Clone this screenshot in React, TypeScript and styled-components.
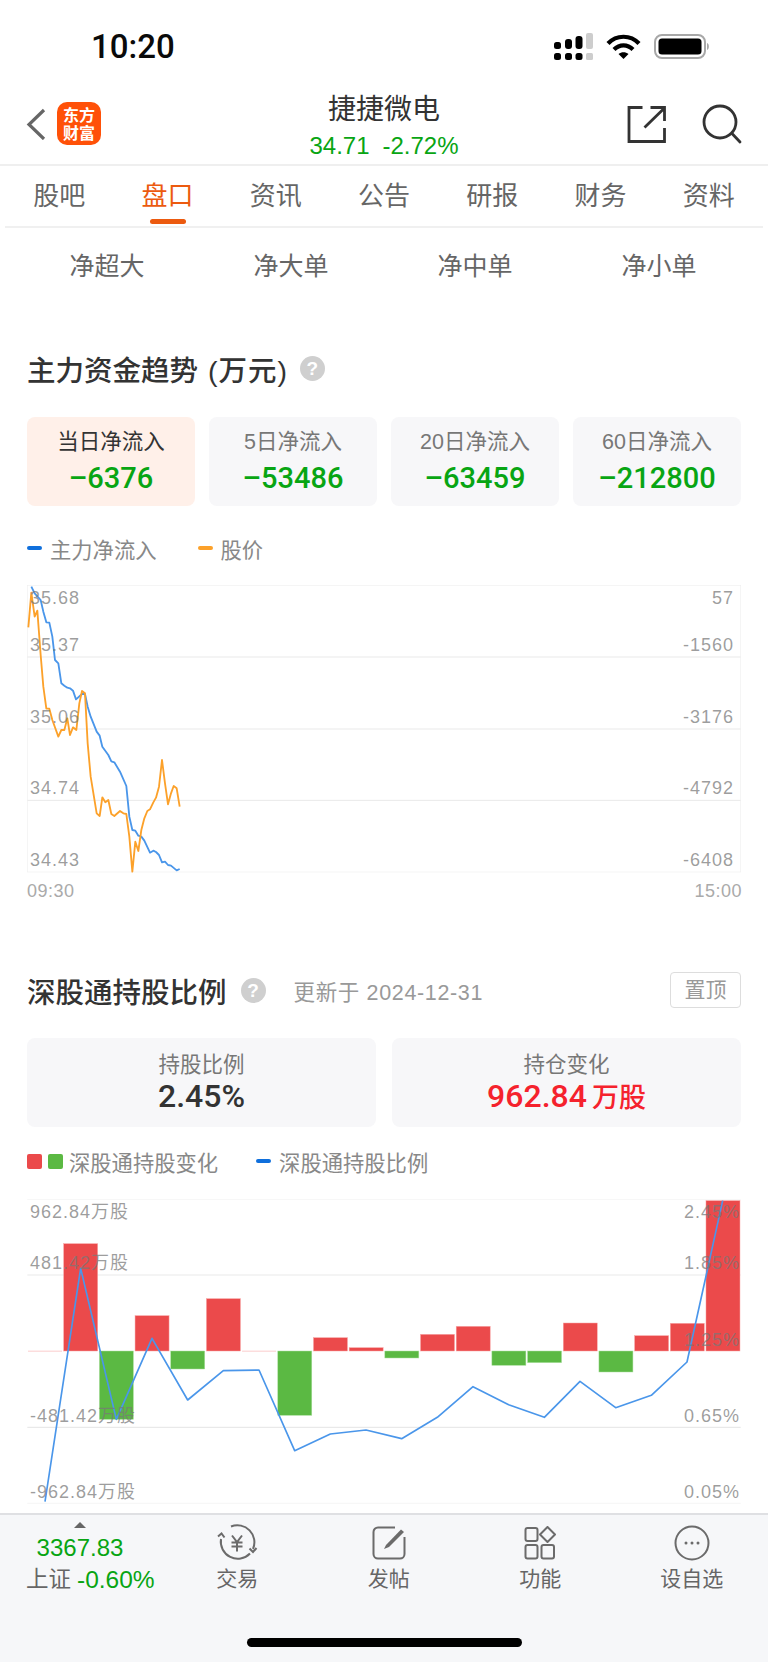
import React from 'react';
import styled, { createGlobalStyle } from 'styled-components';

const FONT = '"Liberation Sans", "Noto Sans CJK SC", sans-serif';
const GREEN = '#08a513';

const GlobalStyle = createGlobalStyle`
    html, body {
        margin: 0;
        padding: 0;
        background: #fff;
    }
    * {
        box-sizing: border-box;
    }
`;

const Page = styled.div`
    width: 768px;
    height: 1662px;
    overflow: hidden;
    display: flex;
    flex-direction: column;
    background: #fff;
    font-family: ${FONT};
    color: #333;
`;

const StatusBar = styled.div`
    height: 92px;
    display: flex;
    align-items: center;
    justify-content: space-between;
    padding: 0 57px 0 91px;
`;

const StatusIcons = styled.div`
    display: flex;
    align-items: center;
    gap: 13px;
`;

const Clock = styled.div`
    font-family: Roboto, sans-serif;
    font-weight: 500;
    font-size: 33px;
    color: #0a0a0a;
`;

const NavBar = styled.div`
    height: 74px;
    display: grid;
    grid-template-columns: 1fr auto 1fr;
    align-items: start;
    border-bottom: 2px solid #efefef;
`;

const NavLeft = styled.div`
    display: flex;
    align-items: center;
    padding: 10px 0 0 26px;
    gap: 11px;
`;

const Logo = styled.div`
    width: 44px;
    height: 43px;
    padding-top: 3px;
    border-radius: 10px;
    background: #ff5108;
    color: #fff;
    font-family: "Noto Sans CJK SC", sans-serif;
    font-weight: 700;
    font-size: 16px;
    line-height: 18px;
    text-align: center;
`;

const NavTitle = styled.div`
    text-align: center;
    padding-top: 1px;
`;

const StockName = styled.div`
    font-size: 28px;
    line-height: 34px;
    color: #333;
`;

const StockPrice = styled.div`
    font-size: 24px;
    line-height: 28px;
    margin-top: 5px;
    color: ${GREEN};
    display: flex;
    gap: 13px;
    justify-content: center;
`;

const NavRight = styled.div`
    display: flex;
    justify-content: flex-end;
    align-items: center;
    gap: 36px;
    padding: 12px 26px 0 0;
`;

const Tabs = styled.div`
    display: grid;
    grid-template-columns: repeat(7, 1fr);
    margin: 0 5px;
    height: 62px;
    border-bottom: 2px solid #f0f0f0;
`;

const Tab = styled.div<{ $active?: boolean }>`
    position: relative;
    text-align: center;
    font-size: 26px;
    line-height: 60px;
    color: ${(props) => (props.$active ? '#ec5a0f' : '#666')};

    ${(props) =>
        props.$active &&
        `&::after {
            content: '';
            position: absolute;
            left: 37px;
            bottom: 2px;
            width: 36px;
            height: 5px;
            border-radius: 3px;
            background: #ec5a0f;
        }`}
`;

const SubTabs = styled.div`
    display: grid;
    grid-template-columns: repeat(4, 184px);
    padding: 0 15px 4px;
    height: 76px;
    align-items: center;
`;

const SubTab = styled.div`
    text-align: center;
    font-size: 25px;
    color: #666;
`;

const SectionHead = styled.div<{ $top: number }>`
    display: flex;
    align-items: center;
    height: 40px;
    margin: ${(props) => props.$top}px 27px 0;
`;

const SectionTitle = styled.div`
    font-size: 28.500px;
    font-weight: 500;
    color: #333;
`;

const TitleUnit = styled.span`
    margin-left: 2px;
    letter-spacing: 1px;
`;

const Help = styled.span<{ $left: number }>`
    width: 25px;
    height: 25px;
    margin-left: ${(props) => props.$left}px;
    border-radius: 50%;
    background: #cfcfcf;
    color: #fff;
    font-size: 19px;
    font-weight: 700;
    line-height: 25px;
    text-align: center;
`;

const UpdatedAt = styled.div`
    margin-left: 28px;
    font-size: 21.500px;
    color: #999;
    letter-spacing: 0.650px;
`;

const PinButton = styled.div`
    margin-left: auto;
    width: 71px;
    height: 36px;
    border: 1px solid #ddd;
    border-radius: 4px;
    font-size: 21px;
    line-height: 34px;
    text-align: center;
    color: #999;
`;

const CardGrid = styled.div<{ $cols: number; $gap: number; $top: number }>`
    display: grid;
    grid-template-columns: repeat(${(props) => props.$cols}, 1fr);
    gap: ${(props) => props.$gap}px;
    margin: ${(props) => props.$top}px 27px 0;
`;

const Card = styled.div<{ $active?: boolean }>`
    height: 89px;
    border-radius: 8px;
    background: ${(props) => (props.$active ? '#fff0e9' : '#f7f7f9')};
    text-align: center;
    display: flex;
    flex-direction: column;
    align-items: center;
    padding-top: 11px;
`;

const CardLabel = styled.div<{ $active?: boolean }>`
    font-size: 21.500px;
    line-height: 28px;
    color: ${(props) => (props.$active ? '#333' : '#777')};
`;

const HoldLabel = styled(CardLabel)`
    margin-top: 2px;
`;

const CardValue = styled.div<{ $color: string }>`
    font-family: Roboto, "Noto Sans CJK SC", sans-serif;
    font-weight: 500;
    font-size: 29px;
    line-height: 36px;
    margin-top: 4px;
    color: ${(props) => props.$color};
`;

const HoldValue = styled(CardValue)`
    font-size: 32px;
    margin-top: -1px;
`;

const HoldUnit = styled.span`
    font-size: 27px;
    margin-left: 5px;
`;

const Legend = styled.div<{ $top: number }>`
    display: flex;
    align-items: center;
    height: 30px;
    margin: ${(props) => props.$top}px 27px 0;
    font-size: 21.300px;
    color: #888;
`;

const LegendDash = styled.span<{ $color: string; $left?: number }>`
    width: 15px;
    height: 4px;
    border-radius: 2px;
    margin-left: ${(props) => props.$left || 0}px;
    margin-right: 8px;
    background: ${(props) => props.$color};
`;

const LegendSwatch = styled.span<{ $color: string }>`
    width: 15px;
    height: 15px;
    border-radius: 2px;
    margin-right: 6px;
    background: ${(props) => props.$color};
`;

const Chart = styled.div<{ $height: number; $top: number }>`
    position: relative;
    height: ${(props) => props.$height}px;
    margin: ${(props) => props.$top}px 27px 0;

    svg {
        display: block;
    }
`;

const AxisOverlay = styled.div<{ $rows: string; $right: number }>`
    position: absolute;
    inset: 1px ${(props) => props.$right}px 0 3px;
    display: grid;
    grid-template-rows: ${(props) => props.$rows};
    font-size: 18px;
    line-height: 24px;
    letter-spacing: 1px;
    color: rgba(120, 120, 120, 0.72);
    pointer-events: none;
`;

const AxisRow = styled.div`
    display: flex;
    justify-content: space-between;
`;

const TimeAxis = styled.div`
    display: flex;
    justify-content: space-between;
    margin: 6px 26px 0 27px;
    height: 24px;
    font-size: 18px;
    line-height: 24px;
    letter-spacing: 0.500px;
    color: #aaa;
`;

const BottomBar = styled.div`
    position: relative;
    margin-top: 9px;
    flex: 1;
    display: flex;
    align-items: flex-start;
    background: #f6f7f9;
    border-top: 2px solid #dfe0e3;
`;

const IndexBlock = styled.div`
    width: 161.500px;
    padding: 7px 0 0 26px;
    flex-shrink: 0;
`;

const IndexTop = styled.div`
    width: 108px;
    display: flex;
    flex-direction: column;
    align-items: center;
`;

const IndexArrow = styled.span`
    width: 0;
    height: 0;
    border-left: 6px solid transparent;
    border-right: 6px solid transparent;
    border-bottom: 6px solid #666;
`;

const IndexValue = styled.div`
    font-size: 24px;
    line-height: 28px;
    margin-top: 6px;
    color: ${GREEN};
`;

const IndexChange = styled.div`
    display: flex;
    align-items: center;
    gap: 6px;
    margin-top: 3px;
    font-size: 24.500px;
    line-height: 30px;
    color: ${GREEN};
    white-space: nowrap;
`;

const IndexName = styled.span`
    font-size: 22.500px;
    color: #666;
`;

const BarItem = styled.div`
    width: 151.500px;
    display: flex;
    flex-direction: column;
    align-items: center;
    padding-top: 9px;
    font-size: 21px;
    line-height: 28px;
    color: #666;
`;

const BarIcon = styled.div`
    height: 38px;
    margin-bottom: 3px;
    display: flex;
    align-items: center;
`;

const HomeIndicator = styled.div`
    position: absolute;
    left: 247px;
    bottom: 15px;
    width: 275px;
    height: 9px;
    border-radius: 5px;
    background: #000;
`;

const flowCards = [
    { label: '当日净流入', value: '–6376', active: true },
    { label: '5日净流入', value: '–53486' },
    { label: '20日净流入', value: '–63459' },
    { label: '60日净流入', value: '–212800' },
];

const orangeLine =
    '85,172 94,68 104,140 112,122 122,255 130,350 139,416 148,416 157,450 175,500 184,480 193,480 202,445 210,495 219,472 229,480 238,400 246,363 255,370 263,520 272,620 290,730 299,738 307,682 316,697 325,690 334,732 343,738 360,723 370,730 379,732 388,800 397,905 406,815 415,843 424,780 433,745 442,723 450,718 460,697 468,683 477,650 486,570 495,640 504,703 513,670 521,648 530,655 539,710';

const blueLine =
    '94,50 104,70 122,90 130,125 139,157 148,158 157,200 165,270 175,280 184,340 193,347 202,353 210,355 219,362 228,388 246,372 255,372 263,410 272,440 290,485 299,497 307,530 325,555 334,574 343,577 360,605 379,648 388,740 397,780 406,782 415,797 424,800 433,812 450,848 460,842 468,846 477,855 486,877 495,875 504,885 513,887 530,901 539,897';

const holdLine =
    '135,965 242,265 349,718 456,475 563,660 670,572 777,570 884,812 991,762 1098,750 1205,776 1312,712 1419,620 1526,674 1633,712 1740,604 1847,683 1954,646 2061,546 2168,62';

// y of the far end of every bar, base line is y = 513 (chart units, 3 per px)
const holdBars = [
    513, 191, 718, 407, 567, 356, 513, 706, 473, 503, 534, 463, 439, 556, 548, 429, 576, 467, 430, 62,
];

const FlowChart = () => (
    <svg width="714" height="288" viewBox="81 45 2142 864" fill="none">
        <rect x="82" y="46" width="2140" height="860" stroke="#f0f0f0" strokeWidth="2" />
        <path d="M82 261H2222M82 477H2222M82 691H2222" stroke="#e9e9e9" strokeWidth="3" />
        <polyline points={blueLine} stroke="#4a96ea" strokeWidth="5.500" strokeLinejoin="round" />
        <polyline points={orangeLine} stroke="#fca12a" strokeWidth="5.500" strokeLinejoin="round" />
    </svg>
);

const HoldChart = () => (
    <svg width="714" height="305" viewBox="81 57 2142 915" fill="none">
        <path d="M82 58H2222M82 970H2222" stroke="#f0f0f0" strokeWidth="2" />
        <path d="M82 285H2222M82 742H2222" stroke="#e9e9e9" strokeWidth="3.500" />
        {holdBars.map((end, i) => {
            const x = 84 + i * 107.05;
            if (end === 513) {
                return <rect key={i} x={x} y="512" width="102" height="3" fill="#fbcccc" />;
            }
            const up = end < 513;
            return (
                <rect
                    key={i}
                    x={x}
                    y={up ? end : 513}
                    width="102"
                    height={Math.abs(end - 513)}
                    fill={up ? '#eb4a4b' : '#5bb943'}
                    stroke={up ? '#f8a5a5' : '#acdfa0'}
                    strokeWidth="1.500"
                />
            );
        })}
        <polyline points={holdLine} stroke="#4a96ea" strokeWidth="5" strokeLinejoin="round" />
    </svg>
);

const BackIcon = () => (
    <svg width="20" height="32" viewBox="0 0 20 32" fill="none">
        <path d="M18 2L3 16.500L18 31" stroke="#666" strokeWidth="3.200" />
    </svg>
);

const ShareIcon = () => (
    <svg width="40" height="40" viewBox="0 0 40 40" fill="none" stroke="#333" strokeWidth="2.800">
        <path d="M16.500 3.500H3V37.500H38.500V24" />
        <path d="M18.500 23.500L38 4.500M24.500 3.500H38.500V17" />
    </svg>
);

const SearchIcon = () => (
    <svg width="40" height="40" viewBox="0 0 40 40" fill="none" stroke="#333" strokeWidth="2.800">
        <circle cx="18" cy="18" r="16" />
        <path d="M30 29.500L38 38" strokeLinecap="round" />
    </svg>
);

const SignalIcon = () => (
    <svg width="39" height="27" viewBox="0 0 39 27" fill="#000">
        <rect x="0" y="20" width="7" height="7" rx="2.500" />
        <rect x="11" y="20" width="7" height="7" rx="2.500" />
        <rect x="21.500" y="20" width="7" height="7" rx="2.500" />
        <rect x="32" y="20" width="7" height="7" rx="1.500" fill="#cdcdcd" />
        <rect x="0" y="9" width="7" height="7" rx="2.500" />
        <rect x="11" y="6" width="7" height="10" rx="3" />
        <rect x="21.500" y="3" width="7" height="13" rx="3" />
        <rect x="32" y="0" width="7" height="16" rx="2" fill="#cdcdcd" />
    </svg>
);

const WifiIcon = () => (
    <svg width="35" height="25" viewBox="0 0 35 25" fill="none" stroke="#000" strokeWidth="4.200">
        <path d="M2 9.500C10.500 .5 24.500 .5 33 9.500" />
        <path d="M8 15.500C13.500 10 21.500 10 27 15.500" />
        <path d="M12.500 20L17.500 25L22.500 20C19.500 17.500 15.500 17.500 12.500 20Z" fill="#000" stroke="none" />
    </svg>
);

const BatteryIcon = () => (
    <svg width="57" height="25" viewBox="0 0 57 25" fill="none">
        <rect x="1" y="1" width="50" height="23" rx="7" stroke="#a8a8a8" strokeWidth="2" />
        <rect x="4.500" y="4.500" width="43" height="16" rx="3.500" fill="#000" />
        <path d="M53 9C55.500 9.500 55.500 15.500 53 16Z" fill="#a8a8a8" />
    </svg>
);

const TradeIcon = () => (
    <svg width="42" height="38" viewBox="0 0 42 38" fill="none" stroke="#6b6b6b" strokeWidth="2">
        <path d="M15 2.500A17 17 0 0 1 37 25" />
        <path d="M34 29.500A17 17 0 0 1 5 15" />
        <path d="M2 12.500L5.500 9.500L8.500 13.500M33.500 24.500L37 28L40.500 24" />
        <path d="M16 11.500L21 18L26 11.500M21 18V27.500M15.500 18.500H26.500M15.500 22.500H26.500" />
    </svg>
);

const PostIcon = () => (
    <svg width="36" height="36" viewBox="0 0 36 36" fill="none" stroke="#6b6b6b" strokeWidth="2">
        <path d="M24 2.500H7A4.500 4.500 0 0 0 2.500 7V29A4.500 4.500 0 0 0 7 33.500H29A4.500 4.500 0 0 0 33.500 29V12" />
        <path d="M13 24L15 20L30 4.500L33 7L18 22Z" fill="#6b6b6b" stroke="none" />
    </svg>
);

const FeatureIcon = () => (
    <svg width="32" height="34" viewBox="0 0 32 34" fill="none" stroke="#6b6b6b" strokeWidth="2">
        <rect x="1.500" y="2" width="12" height="13" rx="2" />
        <path d="M23.500 1L31 8.500L23.500 16L16 8.500Z" strokeLinejoin="round" />
        <rect x="1.500" y="19" width="12" height="13.500" rx="2" />
        <rect x="17.500" y="19" width="12.500" height="13.500" rx="2" />
    </svg>
);

const MoreIcon = () => (
    <svg width="36" height="36" viewBox="0 0 36 36" fill="#6b6b6b">
        <circle cx="18" cy="18" r="16.500" fill="none" stroke="#6b6b6b" strokeWidth="2" />
        <circle cx="12" cy="18" r="1.500" />
        <circle cx="18" cy="18" r="1.500" />
        <circle cx="24" cy="18" r="1.500" />
    </svg>
);

const App = () => (
    <Page>
        <GlobalStyle />
        <StatusBar>
            <Clock>10:20</Clock>
            <StatusIcons>
                <SignalIcon />
                <WifiIcon />
                <BatteryIcon />
            </StatusIcons>
        </StatusBar>
        <NavBar>
            <NavLeft>
                <BackIcon />
                <Logo>
                    东方
                    <br />
                    财富
                </Logo>
            </NavLeft>
            <NavTitle>
                <StockName>捷捷微电</StockName>
                <StockPrice>
                    <span>34.71</span>
                    <span>-2.72%</span>
                </StockPrice>
            </NavTitle>
            <NavRight>
                <ShareIcon />
                <SearchIcon />
            </NavRight>
        </NavBar>
        <Tabs>
            {['股吧', '盘口', '资讯', '公告', '研报', '财务', '资料'].map((name) => (
                <Tab key={name} $active={name === '盘口'}>
                    {name}
                </Tab>
            ))}
        </Tabs>
        <SubTabs>
            {['净超大', '净大单', '净中单', '净小单'].map((name) => (
                <SubTab key={name}>{name}</SubTab>
            ))}
        </SubTabs>

        <SectionHead $top={44}>
            <SectionTitle>
                主力资金趋势 <TitleUnit>(万元)</TitleUnit>
            </SectionTitle>
            <Help $left={12}>?</Help>
        </SectionHead>
        <CardGrid $cols={4} $gap={14} $top={29}>
            {flowCards.map((card) => (
                <Card key={card.label} $active={card.active}>
                    <CardLabel $active={card.active}>{card.label}</CardLabel>
                    <CardValue $color={GREEN}>{card.value}</CardValue>
                </Card>
            ))}
        </CardGrid>
        <Legend $top={27}>
            <LegendDash $color="#0f6fdc" />
            主力净流入
            <LegendDash $color="#fca12a" $left={41} />
            股价
        </Legend>
        <Chart $height={288} $top={22}>
            <FlowChart />
            <AxisOverlay $rows="47px repeat(3, 71.500px)" $right={7}>
                <AxisRow><span>35.68</span><span>57</span></AxisRow>
                <AxisRow><span>35.37</span><span>-1560</span></AxisRow>
                <AxisRow><span>35.06</span><span>-3176</span></AxisRow>
                <AxisRow><span>34.74</span><span>-4792</span></AxisRow>
                <AxisRow><span>34.43</span><span>-6408</span></AxisRow>
            </AxisOverlay>
        </Chart>
        <TimeAxis>
            <span>09:30</span>
            <span>15:00</span>
        </TimeAxis>

        <SectionHead $top={67}>
            <SectionTitle>深股通持股比例</SectionTitle>
            <Help $left={14}>?</Help>
            <UpdatedAt>更新于 2024-12-31</UpdatedAt>
            <PinButton>置顶</PinButton>
        </SectionHead>
        <CardGrid $cols={2} $gap={16} $top={28}>
            <Card>
                <HoldLabel>持股比例</HoldLabel>
                <HoldValue $color="#333">2.45%</HoldValue>
            </Card>
            <Card>
                <HoldLabel>持仓变化</HoldLabel>
                <HoldValue $color="#f5222d">
                    962.84<HoldUnit>万股</HoldUnit>
                </HoldValue>
            </Card>
        </CardGrid>
        <Legend $top={19}>
            <LegendSwatch $color="#eb4a4b" />
            <LegendSwatch $color="#5bb943" />
            <span>深股通持股变化</span>
            <LegendDash $color="#0f6fdc" $left={38} />
            深股通持股比例
        </Legend>
        <Chart $height={305} $top={23}>
            <HoldChart />
            <AxisOverlay $rows="51px 77px 76px 76px" $right={1}>
                <AxisRow><span>962.84万股</span><span>2.45%</span></AxisRow>
                <AxisRow><span>481.42万股</span><span>1.85%</span></AxisRow>
                <AxisRow><span /><span>1.25%</span></AxisRow>
                <AxisRow><span>-481.42万股</span><span>0.65%</span></AxisRow>
                <AxisRow><span>-962.84万股</span><span>0.05%</span></AxisRow>
            </AxisOverlay>
        </Chart>

        <BottomBar>
            <IndexBlock>
                <IndexTop>
                    <IndexArrow />
                    <IndexValue>3367.83</IndexValue>
                </IndexTop>
                <IndexChange>
                    <IndexName>上证</IndexName>
                    <span>-0.60%</span>
                </IndexChange>
            </IndexBlock>
            <BarItem><BarIcon><TradeIcon /></BarIcon>交易</BarItem>
            <BarItem><BarIcon><PostIcon /></BarIcon>发帖</BarItem>
            <BarItem><BarIcon><FeatureIcon /></BarIcon>功能</BarItem>
            <BarItem><BarIcon><MoreIcon /></BarIcon>设自选</BarItem>
            <HomeIndicator />
        </BottomBar>
    </Page>
);

export default App;
